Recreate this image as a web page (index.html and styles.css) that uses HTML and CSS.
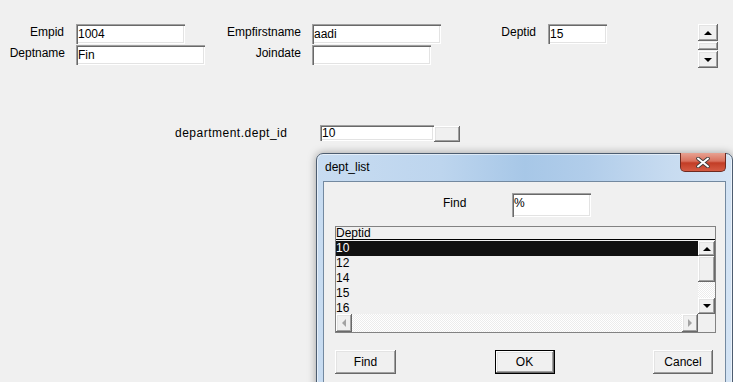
FILE: index.html
```html
<!DOCTYPE html>
<html>
<head>
  <title>Employee</title>
  <link rel="stylesheet" href="styles.css">
</head>
<body>
  <div class="window">
    <div class="top">
      <div class="emp-form">
        <label class="lbl">Empid</label>
        <div class="cell"><input class="edit w109" value="1004" readonly></div>
        <label class="lbl">Empfirstname</label>
        <div class="cell"><input class="edit w129" value="aadi" readonly></div>
        <label class="lbl">Deptid</label>
        <div class="cell"><input class="edit w59" value="15" readonly></div>

        <label class="lbl">Deptname</label>
        <div class="cell"><input class="edit w129" value="Fin" readonly></div>
        <label class="lbl">Joindate</label>
        <div class="cell"><input class="edit w119" value="" readonly></div>
      </div>

      <div class="spin">
        <div class="raised spin-btn"><span class="arrow-up"></span></div>
        <div class="raised spin-mid"></div>
        <div class="raised spin-btn"><span class="arrow-down"></span></div>
      </div>
    </div>

    <div class="dept-row">
      <label class="dept-lbl">department.dept_id</label>
      <input class="edit dept-edit" value="10" readonly>
      <div class="raised drop-btn"></div>
    </div>
  </div>

  <!-- response window opened over the form -->
  <div class="dialog">
    <div class="titlebar">
      <span class="title">dept_list</span>
      <div class="close">
        <svg width="14" height="11" viewBox="0 0 14 11">
          <path d="M2 1.5 L12 9.5 M12 1.5 L2 9.5" stroke="#3b3b3b" stroke-width="3.6" stroke-linecap="round"/>
          <path d="M2 1.5 L12 9.5 M12 1.5 L2 9.5" stroke="#fff" stroke-width="2" stroke-linecap="round"/>
        </svg>
      </div>
    </div>

    <div class="client">
      <div class="find-row">
        <label class="find-lbl">Find</label>
        <input class="edit find-edit" value="%" readonly>
      </div>

      <div class="list">
        <div class="list-head">Deptid</div>
        <div class="list-body">
          <div class="rows">
            <div class="row selected">10</div>
            <div class="row">12</div>
            <div class="row">14</div>
            <div class="row">15</div>
            <div class="row">16</div>
          </div>
          <div class="vscroll">
            <div class="raised sb-btn up"><span class="arrow-up"></span></div>
            <div class="raised thumb"></div>
            <div class="track"></div>
            <div class="raised sb-btn down"><span class="arrow-down"></span></div>
          </div>
        </div>
        <div class="list-foot">
          <div class="hscroll">
            <div class="raised hs-btn"><span class="arrow-left"></span></div>
            <div class="track"></div>
            <div class="raised hs-btn"><span class="arrow-right"></span></div>
          </div>
          <div class="corner"></div>
        </div>
      </div>

      <div class="buttons">
        <div class="raised btn">Find</div>
        <div class="raised btn default">OK</div>
        <div class="raised btn">Cancel</div>
      </div>
    </div>
  </div>
</body>
</html>
```

FILE: styles.css
```css
body {
  margin: 0;
  width: 733px;
  height: 382px;
  overflow: hidden;
  position: relative;
  background-color: #f0f0f0;
  font-family: "Liberation Sans", Arial, sans-serif;
  font-size: 12px;
  color: #000;
}

.raised {
  background-color: #f0f0f0;
  box-shadow: inset -1px -1px #696969, inset 1px 1px #fff, inset -2px -2px #a0a0a0, inset 2px 2px #e3e3e3;
  box-sizing: border-box;
}

.edit {
  display: block;
  box-sizing: border-box;
  height: 20px;
  margin: 0;
  padding: 0 2px;
  border: none;
  outline: none;
  background: #fff;
  font-family: "Liberation Sans", Arial, sans-serif;
  font-size: 12px;
  color: #000;
  box-shadow: inset 1px 1px #a0a0a0, inset 2px 2px #696969, inset -1px -1px #fff, inset -2px -2px #e3e3e3;
}

/* top form */
.top {
  display: flex;
  align-items: flex-start;
  padding-top: 24px;
}

.emp-form {
  display: grid;
  grid-template-columns: 76px 150px 86px 178px 58px 59px;
  grid-auto-rows: 20px;
  row-gap: 1px;
}

.lbl {
  text-align: right;
  white-space: nowrap;
  padding-right: 12px;
  line-height: 16px;
}

.emp-form .lbl:nth-of-type(2),
.emp-form .lbl:nth-of-type(4),
.emp-form .lbl:nth-of-type(5) {
  padding-right: 11px;
}

.w109 { width: 109px; }
.w129 { width: 129px; }
.w119 { width: 119px; }
.w59 { width: 59px; }

.spin {
  margin-left: 91px;
  display: flex;
  flex-direction: column;
  width: 20px;
}

.spin-btn {
  height: 17px;
  display: flex;
  align-items: center;
  justify-content: center;
}

.spin-mid {
  height: 8px;
  margin: 1px 0;
}

.arrow-up,
.arrow-down {
  width: 0;
  height: 0;
  border-left: 4px solid transparent;
  border-right: 4px solid transparent;
}

.arrow-up { border-bottom: 4px solid #000; }
.arrow-down { border-top: 4px solid #000; }

.arrow-left,
.arrow-right {
  width: 0;
  height: 0;
  border-top: 4px solid transparent;
  border-bottom: 4px solid transparent;
}

.arrow-left { border-right: 4px solid #a3a3a3; }
.arrow-right { border-left: 4px solid #a3a3a3; }

/* retrieval argument row */
.dept-row {
  display: flex;
  align-items: flex-start;
  margin-top: 57px;
  padding-left: 175px;
}

.dept-lbl {
  width: 145px;
  line-height: 15px;
  margin-top: 1px;
  letter-spacing: 0.5px;
}

.dept-edit {
  width: 114px;
  height: 16px;
}

.drop-btn {
  width: 26px;
  height: 16px;
  margin-top: 1px;
}

/* dialog */
.dialog {
  position: absolute;
  left: 316px;
  top: 153px;
  width: 417px;
  height: 250px;
  box-sizing: border-box;
  border: 1px solid #4d5d70;
  border-radius: 7px 7px 0 0;
  background: linear-gradient(90deg, #c8dcf1 0%, #bdd5ee 30%, #a7c7e7 50%, #b1cdea 65%, #c7dbf0 85%, #d3e3f4 100%);
  box-shadow: 0 0 8px rgba(0, 0, 0, 0.35), inset 0 0 0 1px rgba(255, 255, 255, 0.55);
}

.titlebar {
  position: relative;
  height: 27px;
}

.title {
  display: block;
  padding-left: 8px;
  line-height: 27px;
  color: #000;
}

.close {
  position: absolute;
  right: 6px;
  top: -1px;
  width: 46px;
  height: 19px;
  box-sizing: border-box;
  border: 1px solid #6e2a20;
  border-top: none;
  border-radius: 0 0 5px 5px;
  background: linear-gradient(#e7a292 0%, #d9715d 45%, #c23d26 55%, #d55b43 100%);
  display: flex;
  align-items: center;
  justify-content: center;
}

.client {
  margin: 0 6px;
  height: 230px;
  border: 1px solid #7389a0;
  background-color: #f0f0f0;
}

.find-row {
  display: flex;
  align-items: flex-start;
  padding-top: 11px;
  padding-left: 119px;
}

.find-lbl {
  width: 69px;
  line-height: 16px;
  margin-top: 2px;
}

.find-edit {
  width: 79px;
  height: 24px;
  padding-top: 1px;
  padding-bottom: 6px;
}

.list {
  width: 381px;
  height: 107px;
  margin: 9px 0 0 11px;
  box-sizing: border-box;
  border: 1px solid #828282;
  display: flex;
  flex-direction: column;
}

.list-head {
  height: 12px;
  line-height: 12px;
  overflow: hidden;
  border-bottom: 1px solid #000;
  margin-bottom: 1px;
}

.list-body {
  display: flex;
  height: 73px;
}

.rows {
  flex: 1;
  overflow: hidden;
}

.row {
  height: 15px;
  line-height: 15px;
}

.row.selected {
  background-color: #111;
  color: #fff;
}

.vscroll {
  width: 17px;
  display: flex;
  flex-direction: column;
}

.sb-btn {
  height: 15px;
  display: flex;
  align-items: center;
  justify-content: center;
}

.sb-btn.down {
  height: 16px;
}

.thumb {
  height: 26px;
}

.track {
  flex: 1;
  background: repeating-conic-gradient(#fff 0 25%, #ececec 0 50%) 0 0 / 2px 2px;
}

.list-foot {
  display: flex;
  height: 18px;
}

.hscroll {
  flex: 1;
  display: flex;
}

.hs-btn {
  width: 16px;
  display: flex;
  align-items: center;
  justify-content: center;
}

.corner {
  width: 17px;
}

.buttons {
  display: flex;
  justify-content: space-between;
  width: 378px;
  margin: 17px 0 0 11px;
}

.btn {
  width: 60px;
  height: 24px;
  line-height: 24px;
  text-align: center;
}

.btn:first-child {
  width: 61px;
}

.btn.default {
  border: 1px solid #000;
  line-height: 22px;
}
```
